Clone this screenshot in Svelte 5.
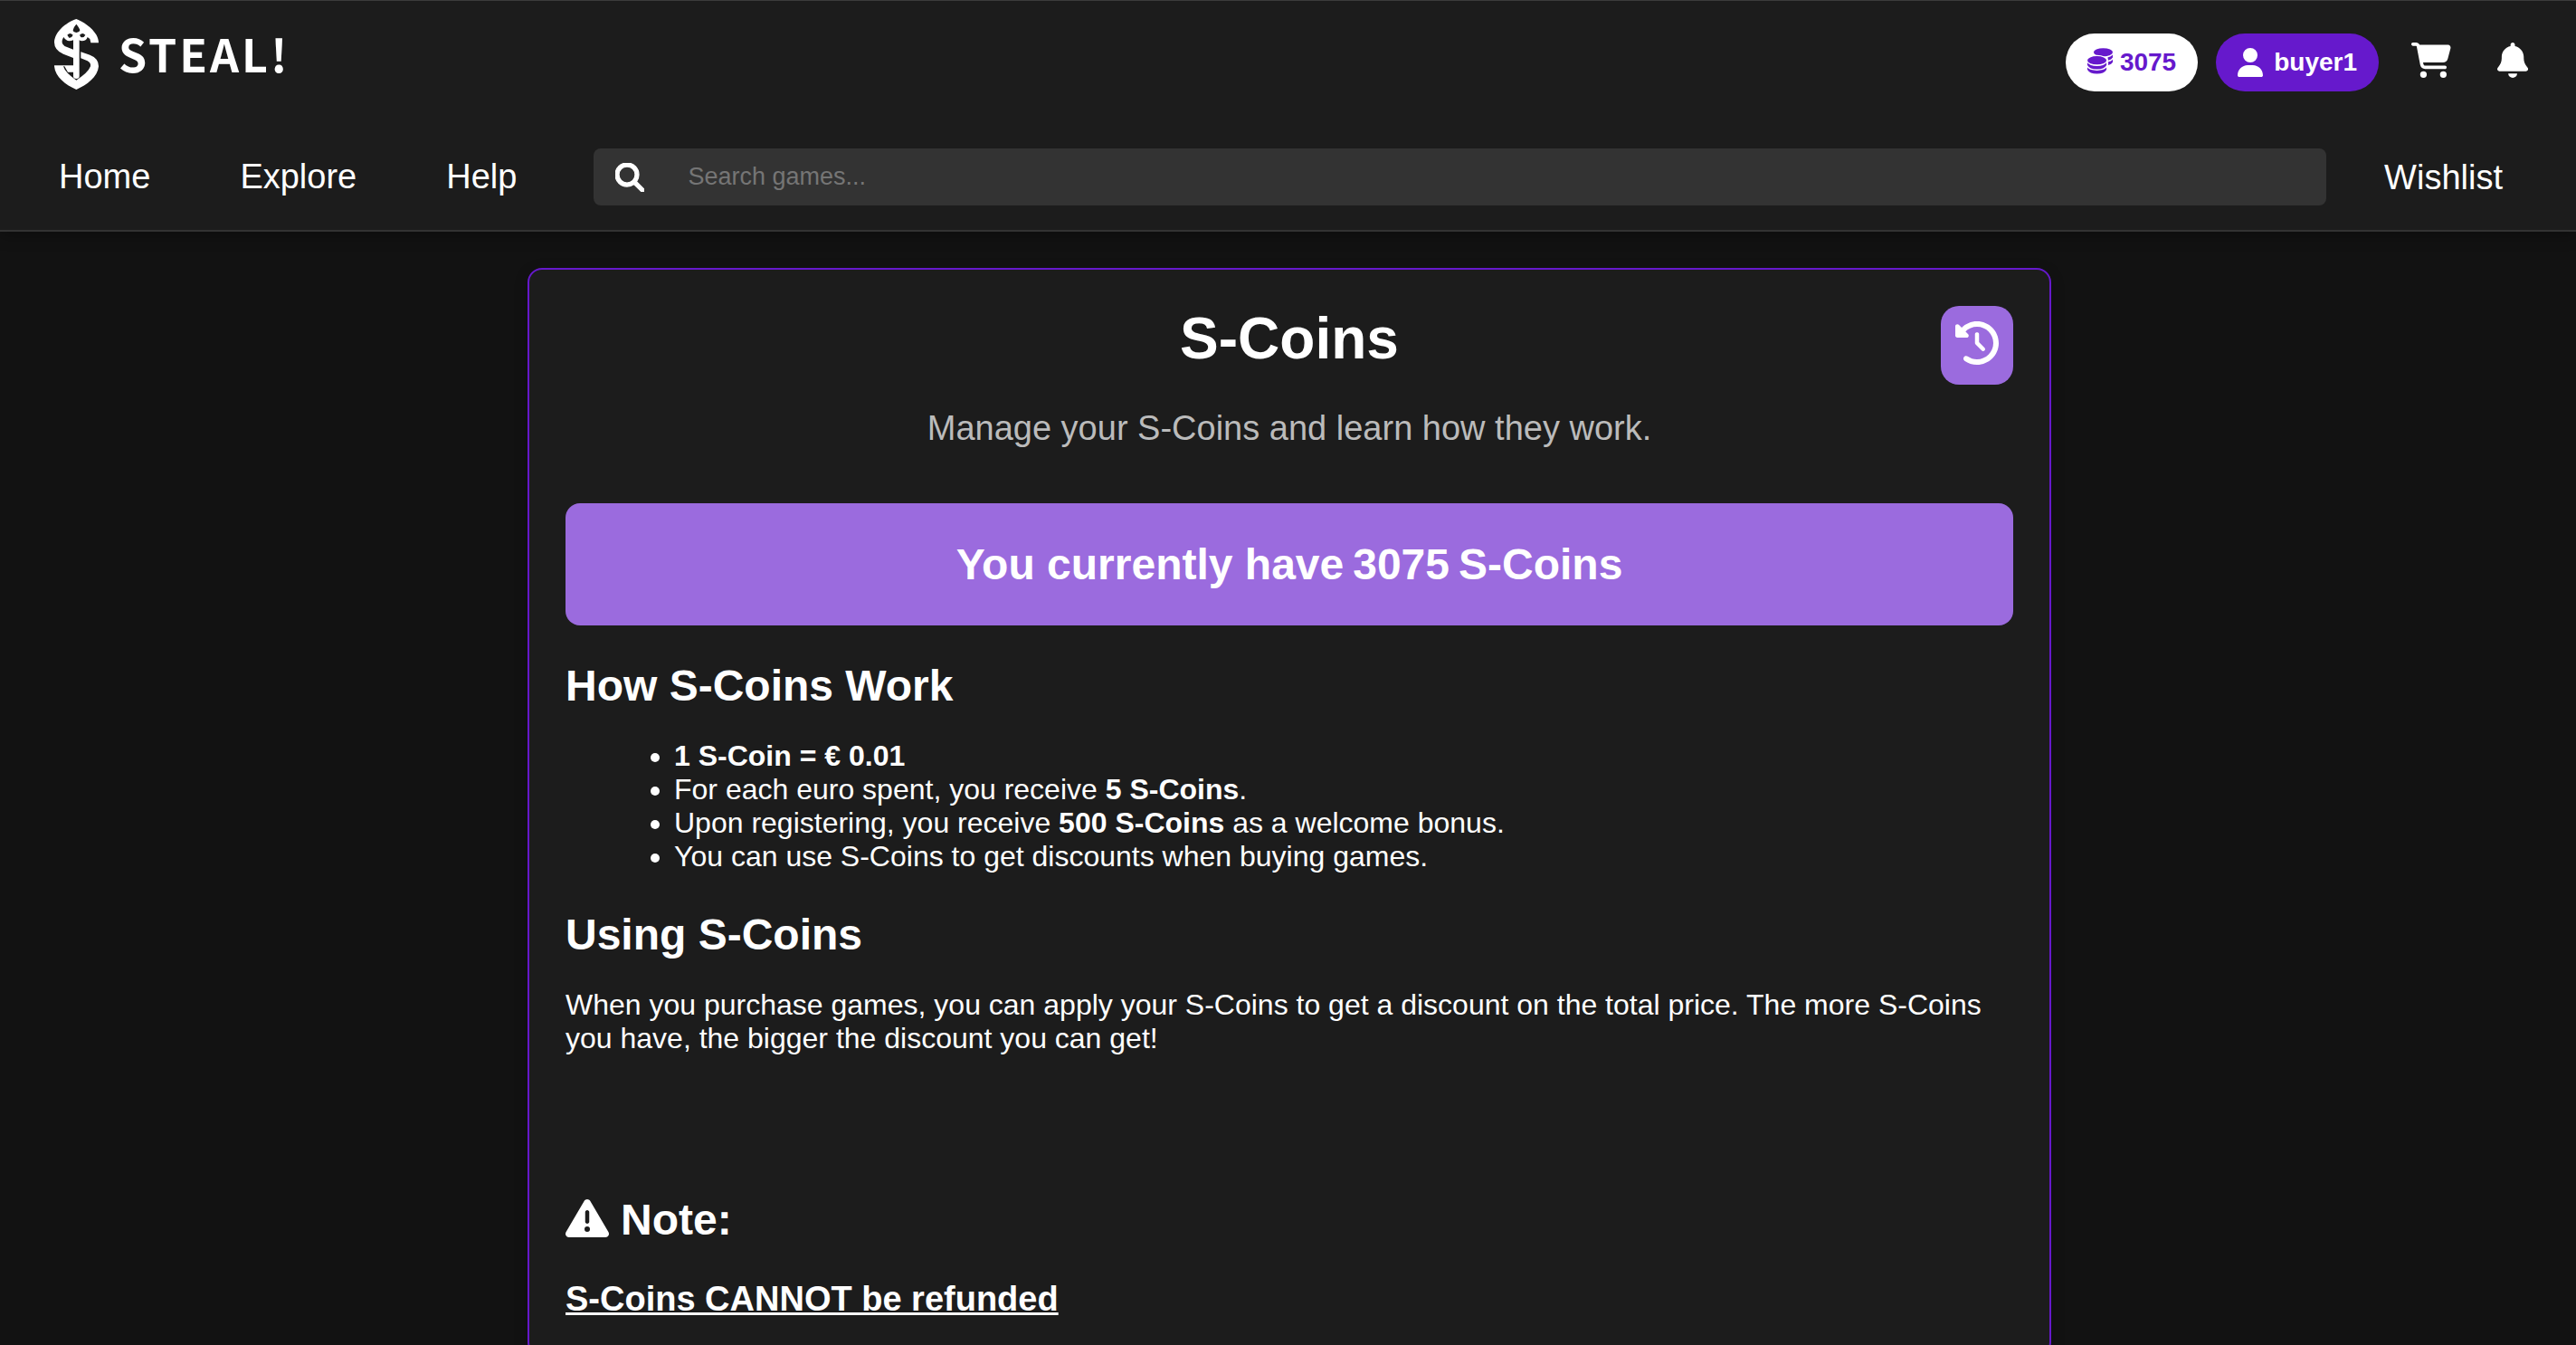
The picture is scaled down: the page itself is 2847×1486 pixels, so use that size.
<script>
  const coins = 3075;
  const user = 'buyer1';
  const links = ['Home', 'Explore', 'Help'];
</script>

<header>
  <div class="top">
    <a class="brand" href="#home" aria-label="Steal!">
      <svg class="mark" viewBox="0 0 147 234" aria-hidden="true">
        <path fill="#fff" d="M73 0C95 8 125 28 139 52C144 61 147 70 147 79H121L118 66L110 60Q106 73 92 73Q86 73 83 70V190Q83 198 73 198Q63 198 63 190V176H45L34 157H30Q36 178 73 203Q112 178 120 157Q122 145 110 139L88 130V109L118 119Q147 130 147 157C144 192 108 219 73 234C38 219 3 192 0 157V154H63V129L30 116Q0 103 0 77C2 42 38 12 73 0ZM31 60Q22 74 28 83Q32 90 44 94L63 101V70Q57 73 50 73Q38 72 31 60Z" />
        <path fill="#1c1c1c" d="M73 17Q85 32 85 37Q84 43 73 45Q62 43 62 37Q63 28 73 17ZM43 53Q52 43 62 53Q57 64 49 62ZM84 53Q94 43 103 53Q97 64 88 60Z" />
      </svg>
      <span class="wordmark">STEAL!</span>
    </a>
    <div class="actions">
      <a class="pill coins" href="#coins">
        <svg class="coin-icon" viewBox="0 0 85 87" aria-hidden="true">
          <g fill="currentColor"><ellipse cx="53" cy="14" rx="32" ry="14" /><path d="M68 31Q80 28 85 22V31Q81 38 70 41ZM70 46Q80 44 85 38V47Q81 54 70 57Z" /></g>
          <ellipse cx="32" cy="41" rx="36" ry="18" fill="#fff" />
          <g fill="currentColor"><ellipse cx="32" cy="41" rx="32" ry="14" /><path d="M0 49Q8 60 32 60T64 49V57Q56 71 32 71T0 57ZM0 65Q8 75 32 75T64 65V72Q56 86 32 86T0 72Z" /></g>
        </svg>
        {coins}
      </a>
      <a class="pill user" href="#profile">
        <svg class="user-icon" viewBox="0 0 448 512" aria-hidden="true"><path fill="currentColor" d="M224 256A128 128 0 1 0 224 0a128 128 0 1 0 0 256zm-45.7 48C79.8 304 0 383.8 0 482.3C0 498.7 13.3 512 29.7 512l388.6 0c16.4 0 29.7-13.3 29.7-29.7C448 383.8 368.2 304 269.7 304l-91.4 0z" /></svg>
        {user}
      </a>
      <a class="icon-link cart" href="#cart" aria-label="Cart">
        <svg viewBox="0 0 576 512" aria-hidden="true"><path fill="currentColor" d="M0 24C0 10.700 10.700 0 24 0L69.500 0c22 0 41.500 12.800 50.600 32l411 0c26.300 0 45.500 25 38.600 50.400l-41 152.300c-8.500 31.400-37 53.300-69.500 53.300l-288.500 0 5.400 28.500c2.200 11.300 12.100 19.500 23.600 19.500L488 336c13.300 0 24 10.700 24 24s-10.700 24-24 24l-288.300 0c-34.600 0-64.300-24.600-70.700-58.500L77.400 54.500c-.7-3.800-4-6.500-7.900-6.500L24 48C10.700 48 0 37.300 0 24zM128 464a48 48 0 1 1 96 0 48 48 0 1 1 -96 0zm336-48a48 48 0 1 1 0 96 48 48 0 1 1 0-96z" /></svg>
      </a>
      <a class="icon-link bell" href="#notifications" aria-label="Notifications">
        <svg viewBox="0 0 448 512" aria-hidden="true"><path fill="currentColor" d="M224 0c-17.700 0-32 14.300-32 32l0 19.200C119 66 64 130.600 64 208l0 18.800c0 47-17.300 92.400-48.500 127.600l-7.400 8.300c-8.400 9.400-10.400 22.900-5.300 34.400S19.400 416 32 416l384 0c12.600 0 24-7.400 29.200-18.900s3.100-25-5.300-34.400l-7.400-8.300C401.300 319.200 384 273.900 384 226.800l0-18.800c0-77.400-55-142-128-156.800L256 32c0-17.700-14.300-32-32-32zm45.300 493.300c12-12 18.700-28.300 18.700-45.300l-64 0-64 0c0 17 6.700 33.300 18.700 45.300s28.300 18.700 45.300 18.700s33.300-6.700 45.300-18.700z" /></svg>
      </a>
    </div>
  </div>
  <nav>
    <div class="links">
      {#each links as link}
        <a href={'#' + link.toLowerCase()}>{link}</a>
      {/each}
    </div>
    <form class="search" role="search">
      <button type="submit" aria-label="Search">
        <svg viewBox="0 0 512 512" aria-hidden="true"><path fill="currentColor" stroke="currentColor" stroke-width="20" d="M416 208c0 45.900-14.900 88.300-40 122.700L502.600 457.400c12.500 12.500 12.500 32.800 0 45.300s-32.800 12.500-45.300 0L330.700 376c-34.400 25.200-76.800 40-122.700 40C93.100 416 0 322.900 0 208S93.100 0 208 0S416 93.100 416 208zM208 352a144 144 0 1 0 0-288 144 144 0 1 0 0 288z" /></svg>
      </button>
      <input type="text" placeholder="Search games..." aria-label="Search games" />
    </form>
    <a class="wishlist" href="#wishlist">Wishlist</a>
  </nav>
</header>

<main>
  <section class="card">
    <div class="heading">
      <h1>S-Coins</h1>
      <button class="history" aria-label="S-Coins history">
        <svg viewBox="0 0 512 512" aria-hidden="true"><path fill="currentColor" d="M75 75L41 41C25.900 25.900 0 36.600 0 57.900L0 168c0 13.300 10.700 24 24 24l110.100 0c21.400 0 32.100-25.900 17-41l-30.800-30.800C155 85.500 203 64 256 64c106 0 192 86 192 192s-86 192-192 192c-40.800 0-78.600-12.700-109.700-34.400c-14.500-10.100-34.400-6.600-44.600 7.900s-6.600 34.400 7.900 44.600C151.200 495 201.700 512 256 512c141.400 0 256-114.600 256-256S397.400 0 256 0C185.300 0 121.300 28.700 75 75zm181 53c-13.300 0-24 10.700-24 24l0 104c0 6.400 2.500 12.500 7 17l72 72c9.400 9.400 24.600 9.400 33.900 0s9.400-24.600 0-33.900l-65-65 0-94.100c0-13.300-10.700-24-24-24z" /></svg>
      </button>
    </div>
    <p class="subtitle">Manage your S-Coins and learn how they work.</p>
    <p class="balance">
      <span>You currently have</span>
      <span>{coins}</span>
      <span>S-Coins</span>
    </p>

    <h2>How S-Coins Work</h2>
    <ul>
      <li><strong>1 S-Coin = € 0.01</strong></li>
      <li>For each euro spent, you receive <strong>5 S-Coins</strong>.</li>
      <li>Upon registering, you receive <strong>500 S-Coins</strong> as a welcome bonus.</li>
      <li>You can use S-Coins to get discounts when buying games.</li>
    </ul>

    <h2>Using S-Coins</h2>
    <p class="text">When you purchase games, you can apply your S-Coins to get a discount on the total price. The more S-Coins you have, the bigger the discount you can get!</p>

    <h2 class="note">
      <svg viewBox="0 0 512 448" aria-hidden="true"><path fill="currentColor" transform="translate(0 -32)" d="M256 32c14.200 0 27.300 7.500 34.500 19.800l216 368c7.300 12.400 7.300 27.700 .2 40.100S486.300 480 472 480L40 480c-14.300 0-27.600-7.700-34.700-20.100s-7-27.800 .2-40.100l216-368C228.700 39.500 241.800 32 256 32zm0 128c-13.300 0-24 10.700-24 24l0 112c0 13.300 10.700 24 24 24s24-10.700 24-24l0-112c0-13.300-10.700-24-24-24zm32 224a32 32 0 1 0 -64 0 32 32 0 1 0 64 0z" /></svg>
      Note:
    </h2>
    <h3>S-Coins CANNOT be refunded</h3>
  </section>
</main>

<style>
  :global(body) {
    background: #121212;
    color: #fff;
    font-family: "Liberation Sans", Arial, sans-serif;
    font-size: 32px;
    overflow: hidden;
  }

  a { color: inherit; text-decoration: none; }
  svg { display: block; }
  h1, h2, h3, p, ul { margin: 0; }

  button {
    border: 0;
    padding: 0;
    background: none;
    color: inherit;
    font: inherit;
    cursor: pointer;
  }

  header {
    background: #1c1c1c;
    border-top: 1px solid #3c3c3c;
    border-bottom: 2px solid #333;
    box-shadow: 0 4px 16px rgba(0, 0, 0, 0.3);
  }

  .top {
    display: flex;
    justify-content: space-between;
    align-items: flex-start;
    padding: 20px 53px 0 60px;
  }

  .brand { display: flex; align-items: flex-start; gap: 22px; }
  .mark { width: 49px; height: 78px; }
  .wordmark {
    font-family: "Noto Sans CJK JP", sans-serif;
    font-weight: 700;
    font-size: 50px;
    line-height: 74px;
    letter-spacing: 3px;
  }

  .actions {
    display: flex;
    align-items: center;
    padding-top: 16px;
  }

  .pill {
    display: flex;
    align-items: center;
    height: 64px;
    border-radius: 32px;
    padding: 0 24px;
    margin-right: 20px;
    font-size: 28px;
    font-weight: 700;
  }
  .coins { background: #fff; color: #6619cc; gap: 8px; }
  .user { background: #6619cc; gap: 12px; margin-right: 36px; }
  .coin-icon { width: 28px; height: 29px; margin-bottom: 3px; }
  .user-icon { width: 28px; height: 32px; }
  .icon-link svg { height: 39px; margin-bottom: 5px; }
  .cart { margin-right: 51px; }

  nav {
    display: flex;
    align-items: center;
    padding: 63px 81px 27px 65px;
  }
  .links { display: flex; gap: 99px; margin-right: 85px; padding-bottom: 2px; }
  .links a, .wishlist { font-size: 38px; line-height: 44px; }
  .search {
    display: flex;
    align-items: center;
    flex: 1;
    height: 63px;
    background: #333;
    border-radius: 8px;
    margin-right: 64px;
    padding-left: 24px;
    gap: 48px;
  }
  .search svg { width: 32px; height: 32px; }
  .search input {
    flex: 1;
    border: 0;
    padding: 0;
    background: none;
    outline: none;
    color: #fff;
    font: inherit;
    font-size: 27px;
  }
  .search input::placeholder { color: #757575; }

  main { padding: 40px 0 80px 3px; }

  .card {
    box-sizing: border-box;
    max-width: 1684px;
    margin: 0 auto;
    padding: 40px;
    background: #1c1c1c;
    border: 2px solid #6619cc;
    border-radius: 16px;
    box-shadow: 0 4px 16px rgba(0, 0, 0, 0.2);
  }

  .heading { position: relative; }
  h1 { font-size: 64px; line-height: 73px; text-align: center; }
  .history {
    position: absolute;
    top: 0;
    right: 0;
    display: flex;
    justify-content: center;
    width: 80px;
    height: 87px;
    padding-top: 17px;
    background: #9b6bde;
    border-radius: 20px;
  }
  .history svg { width: 48px; height: 48px; }

  .subtitle {
    margin-top: 40px;
    color: #bbb;
    font-size: 38px;
    line-height: 44px;
    text-align: center;
  }
  .balance {
    display: flex;
    justify-content: center;
    gap: 10px;
    margin: 61px 0 39px;
    padding: 40px;
    background: #9b6bde;
    border-radius: 16px;
    font-size: 48px;
    font-weight: 700;
    line-height: 55px;
  }
  h2 { font-size: 48px; line-height: 55px; }
  ul { margin: 32px 0 40px; padding-left: 120px; }
  li, .text { line-height: 37px; }
  .text { margin: 32px 0 154px; }
  .note { display: flex; align-items: center; gap: 13px; }
  .note svg { width: 48px; height: 42px; margin-bottom: 3px; }
  h3 {
    margin-top: 38px;
    font-size: 38px;
    line-height: 44px;
    text-decoration: underline;
  }
</style>
